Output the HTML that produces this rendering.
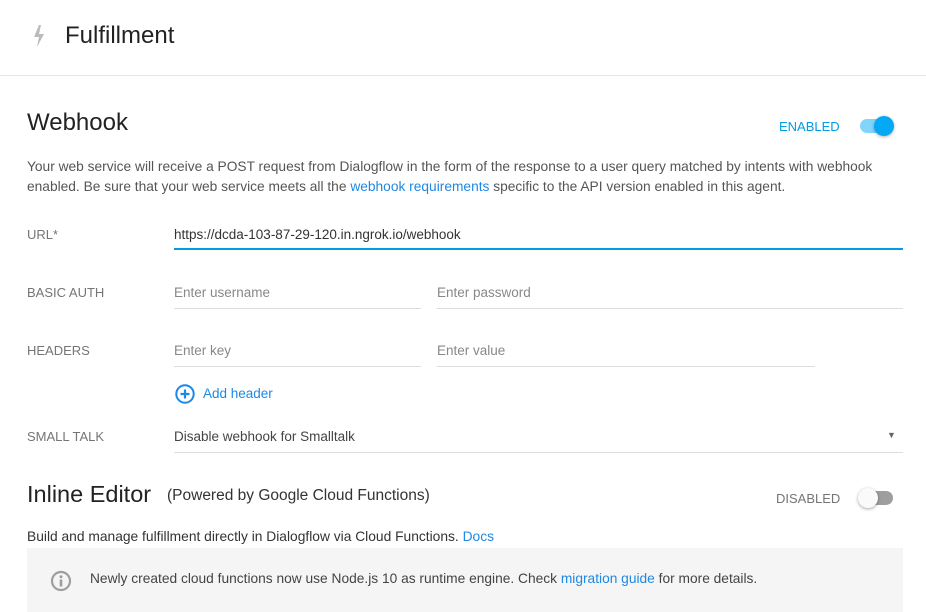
<!DOCTYPE html>
<html><head><style>
body{margin:0;width:926px;height:612px;overflow:hidden;background:#fff;font-family:"Liberation Sans",sans-serif;color:#333;position:relative}
.a{position:absolute;white-space:nowrap}
.lbl{font-size:13px;color:#757575}
.ph{font-size:13.5px;color:#888}
.ul{position:absolute;height:1px;background:#ddd}
a{color:#1e88e5;text-decoration:none}
</style></head><body>
<svg class="a" style="left:31px;top:24px" width="16" height="24" viewBox="0 0 16 24"><path d="M8 1 L3 13 H8 L6 23 L13 10 H8 L10 1Z" fill="#bbb"/></svg>
<div class="a" style="left:65px;top:22px;font-size:24px;color:#222">Fulfillment</div>
<div class="ul" style="left:0;top:75px;width:926px;background:#e5e5e5"></div>

<div class="a" style="left:27px;top:109px;font-size:24px;color:#222">Webhook</div>
<div class="a" style="left:779px;top:119px;font-size:13px;color:#039be5">ENABLED</div>
<div class="a" style="left:860px;top:119px;width:33px;height:14px;border-radius:7px;background:#81d4fa"></div>
<div class="a" style="left:874px;top:116px;width:20px;height:20px;border-radius:50%;background:#03a9f4;box-shadow:0 1px 3px rgba(0,0,0,.3)"></div>
<div class="a" style="left:27px;top:157px;font-size:13.75px;line-height:20px;color:#555">Your web service will receive a POST request from Dialogflow in the form of the response to a user query matched by intents with webhook<br>enabled. Be sure that your web service meets all the <a>webhook requirements</a> specific to the API version enabled in this agent.</div>

<div class="a lbl" style="left:27px;top:227px">URL*</div>
<div class="a" style="left:174px;top:227px;font-size:13.5px;color:#333">https://dcda-103-87-29-120.in.ngrok.io/webhook</div>
<div class="ul" style="left:174px;top:248px;width:729px;height:2px;background:#039be5"></div>

<div class="a lbl" style="left:27px;top:285px">BASIC AUTH</div>
<div class="a ph" style="left:174px;top:285px">Enter username</div>
<div class="ul" style="left:174px;top:308px;width:247px"></div>
<div class="a ph" style="left:437px;top:285px">Enter password</div>
<div class="ul" style="left:437px;top:308px;width:466px"></div>

<div class="a lbl" style="left:27px;top:343px">HEADERS</div>
<div class="a ph" style="left:174px;top:343px">Enter key</div>
<div class="ul" style="left:174px;top:366px;width:247px"></div>
<div class="a ph" style="left:437px;top:343px">Enter value</div>
<div class="ul" style="left:437px;top:366px;width:378px"></div>

<svg class="a" style="left:175px;top:384px" width="20" height="20" viewBox="0 0 20 20"><circle cx="10" cy="10" r="8.7" fill="none" stroke="#1e88e5" stroke-width="2"/><path d="M10 5.5v9M5.5 10h9" stroke="#1e88e5" stroke-width="2.2"/></svg>
<div class="a" style="left:203px;top:386px;font-size:13.5px;color:#1e88e5">Add header</div>

<div class="a lbl" style="left:27px;top:429px">SMALL TALK</div>
<div class="a" style="left:174px;top:429px;font-size:13.5px;color:#444">Disable webhook for Smalltalk</div>
<div class="a" style="left:887px;top:430px;font-size:9px;color:#666">▼</div>
<div class="ul" style="left:174px;top:452px;width:729px"></div>

<div class="a" style="left:27px;top:481px;font-size:23.5px;color:#222">Inline Editor</div>
<div class="a" style="left:167px;top:487px;font-size:15.5px;color:#333">(Powered by Google Cloud Functions)</div>
<div class="a" style="left:776px;top:491px;font-size:13px;color:#757575">DISABLED</div>
<div class="a" style="left:860px;top:491px;width:33px;height:14px;border-radius:7px;background:#9e9e9e"></div>
<div class="a" style="left:858px;top:488px;width:20px;height:20px;border-radius:50%;background:#fafafa;box-shadow:0 1px 3px rgba(0,0,0,.35)"></div>

<div class="a" style="left:27px;top:529px;font-size:13.8px;color:#333">Build and manage fulfillment directly in Dialogflow via Cloud Functions. <a>Docs</a></div>
<div class="a" style="left:27px;top:548px;width:876px;height:64px;background:#f5f5f5"></div>
<svg class="a" style="left:50px;top:570px" width="22" height="22" viewBox="0 0 22 22"><circle cx="11" cy="11" r="9" fill="none" stroke="#9e9e9e" stroke-width="2.2"/><circle cx="11" cy="6.8" r="1.5" fill="#9e9e9e"/><rect x="9.7" y="9.5" width="2.6" height="7" fill="#9e9e9e"/></svg>
<div class="a" style="left:90px;top:571px;font-size:13.75px;color:#444">Newly created cloud functions now use Node.js 10 as runtime engine. Check <a>migration guide</a> for more details.</div>
</body></html>
